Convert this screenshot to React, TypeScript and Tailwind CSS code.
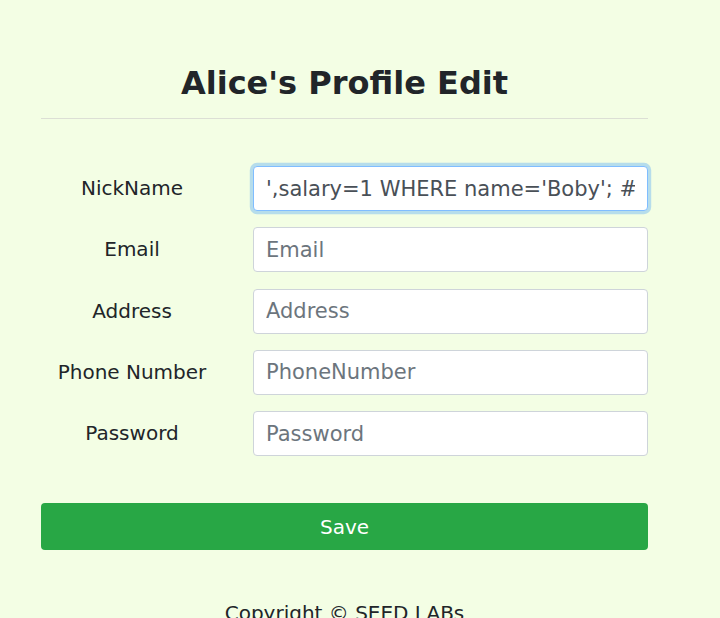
import React from "react";

const fields = [
  { label: "NickName", placeholder: "NickName", value: "',salary=1 WHERE name='Boby'; #", focus: true },
  { label: "Email", placeholder: "Email" },
  { label: "Address", placeholder: "Address" },
  { label: "Phone Number", placeholder: "PhoneNumber" },
  { label: "Password", placeholder: "Password" },
];

export default function App() {
  return (
    <div className="min-h-screen overflow-hidden bg-[#f3fee4] pt-[64px] font-['DejaVu_Sans',sans-serif] text-[#212529]">
      <div className="ml-[41px] w-[607px]">
        <h2 className="text-center text-[32px] font-bold leading-[38px] text-[#212529]">
          Alice's Profile Edit
        </h2>
        <hr className="mt-[16px] border-0 border-t border-[#dcdfd5]" />
        <div className="mt-[47px] grid grid-cols-[182px_395px] gap-x-[30px] gap-y-[16.25px]">
          {fields.map((f) => (
            <React.Fragment key={f.label}>
              <div className="flex items-center justify-center pb-[1px] text-[20px] leading-[30px] text-[#212529]">
                {f.label}
              </div>
              <input
                readOnly
                defaultValue={f.value}
                placeholder={f.placeholder}
                className={
                  f.focus
                    ? "h-[45px] w-full rounded-[4px] border border-[#80bdff] bg-white px-[12px] text-[21px] text-[#495057] shadow-[0_0_0_3.2px_rgba(0,123,255,0.25)] outline-none placeholder:text-[#6c757d]"
                    : "h-[45px] w-full rounded-[4px] border border-[#ced4da] bg-white px-[12px] text-[21px] text-[#495057] outline-none placeholder:text-[#6c757d]"
                }
              />
            </React.Fragment>
          ))}
        </div>
        <button className="mt-[47px] flex h-[47px] w-full items-center justify-center rounded-[4px] bg-[#28a745] text-[20px] text-white">
          Save
        </button>
        <p className="mt-[48px] text-center text-[20px] leading-[30px] text-[#212529]">
          Copyright © SEED LABs
        </p>
      </div>
    </div>
  );
}
